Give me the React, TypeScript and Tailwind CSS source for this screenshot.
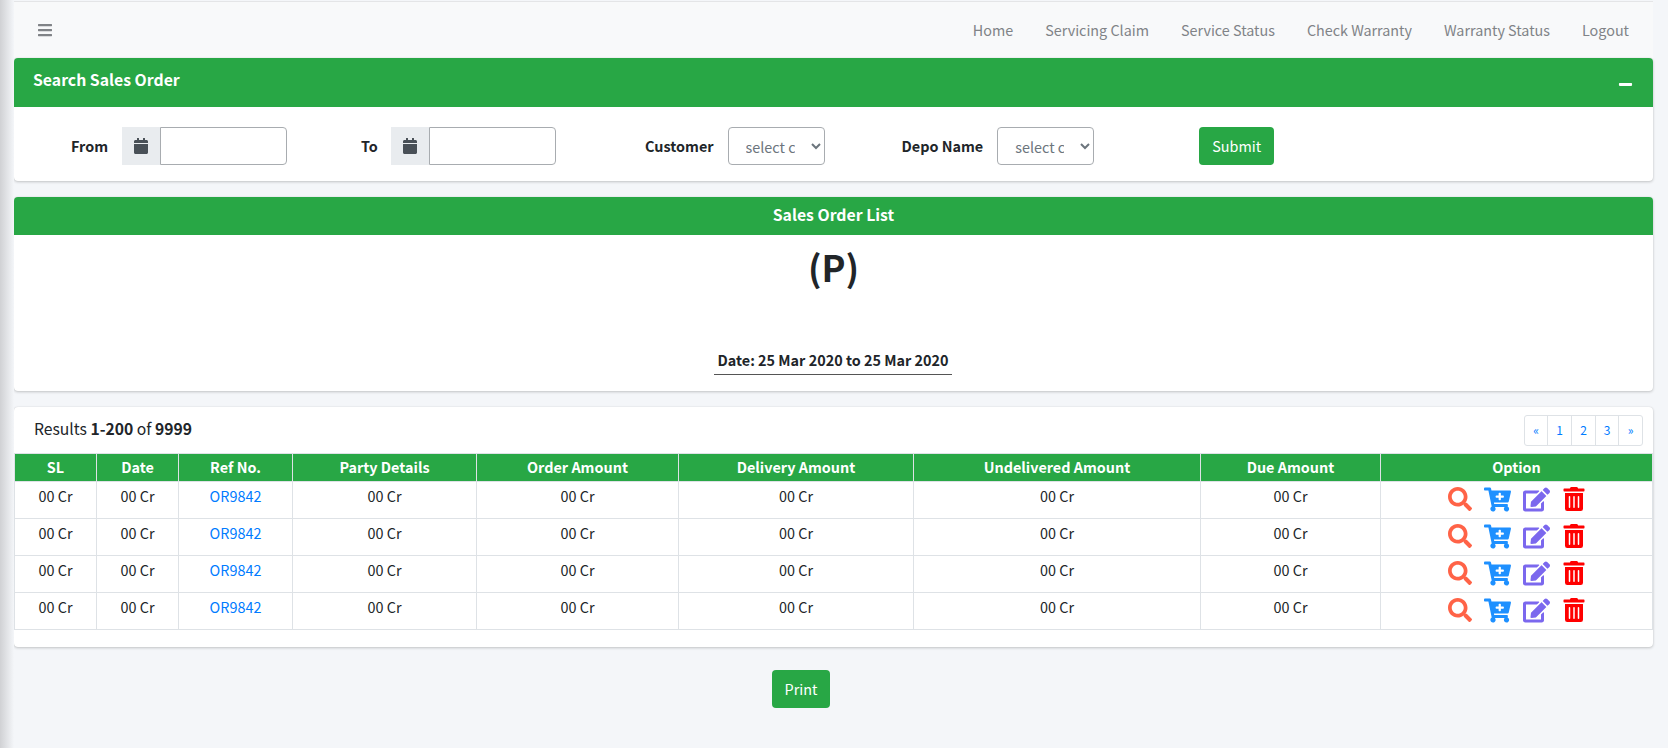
import { FaBars, FaCalendar, FaCartPlus, FaEdit, FaMinus, FaSearch, FaTrashAlt } from 'react-icons/fa';

const navLinks = ['Home', 'Servicing Claim', 'Service Status', 'Check Warranty', 'Warranty Status', 'Logout'];
const columns = [
  { label: 'SL', width: 'w-[82px]' },
  { label: 'Date', width: 'w-[82px]' },
  { label: 'Ref No.', width: 'w-[114px]' },
  { label: 'Party Details', width: 'w-[184px]' },
  { label: 'Order Amount', width: 'w-[202px]' },
  { label: 'Delivery Amount', width: 'w-[235px]' },
  { label: 'Undelivered Amount', width: 'w-[287px]' },
  { label: 'Due Amount', width: 'w-[180px]' },
  { label: 'Option', width: 'w-[272px]' },
];
const rows = [1, 2, 3, 4];
const pages = ['«', '1', '2', '3', '»'];
const pageWidths = ['w-[23px]', 'w-[24px]', 'w-[24px]', 'w-[23px]', 'w-[23px]'];
const cardClass = 'rounded-[4px] bg-white shadow-[0_0_1px_rgba(0,0,0,0.125),0_1px_3px_rgba(0,0,0,0.2)]';

function DateField({ label, labelWidth }: { label: string; labelWidth: string }) {
  return (
    <div className="flex items-center">
      <label className={`${labelWidth} font-bold text-[#212529]`}>{label}</label>
      <div className="flex h-[38px] w-[38px] items-center justify-center bg-[#e9ecef] text-[#495057]">
        <FaCalendar className="text-[16px]" />
      </div>
      <input className="h-[38px] w-[127px] rounded-r-[4px] border border-[#a8acb0] bg-white" />
    </div>
  );
}

function SelectField({ label }: { label: string }) {
  return (
    <div className="flex items-center">
      <label className="mr-[14px] font-bold text-[#212529]">{label}</label>
      <select className="h-[38px] w-[97px] rounded-[4px] border border-[#a8acb0] bg-white px-[13px] text-[#6c757d]">
        <option>select customer</option>
      </select>
    </div>
  );
}

export default function App() {
  return (
    <div
      className="relative h-[748px] overflow-hidden bg-[#f4f6f9] pr-[15px] text-[14.4px] leading-[24px] text-[#212529]"
      style={{ fontFamily: '"Noto Sans CJK SC", "Noto Sans", sans-serif' }}
    >
      <div className="absolute inset-y-0 left-0 w-[14px] bg-gradient-to-r from-[#d0d1d4] to-[#f4f6f9]" />

      <nav className="mt-[1px] flex h-[57px] items-center justify-between border-t border-[#e4e5e7] bg-[#f8f9fa] pl-[37px] pr-[8px]">
        <FaBars className="relative text-[16px] text-[#808387]" />
        <div className="flex text-[14.35px]">
          {navLinks.map((link) => (
            <a key={link} className="px-[16px] text-[#808387]">{link}</a>
          ))}
        </div>
      </nav>

      <main className="ml-[14px] flex flex-col gap-[16px]">
        <section className={cardClass}>
          <div className="flex h-[49px] items-center justify-between rounded-t-[4px] bg-[#28a745] pl-[19px] pr-[20px] text-white">
            <h3 className="mb-[6px] text-[15.8px] font-bold">Search Sales Order</h3>
            <FaMinus className="mt-[4px] text-[15px]" />
          </div>
          <div className="flex h-[74px] items-center pl-[57px] pt-[4px]">
            <DateField label="From" labelWidth="w-[51px]" />
            <div className="ml-[74px]"><DateField label="To" labelWidth="w-[30px]" /></div>
            <div className="ml-[89px]"><SelectField label="Customer" /></div>
            <div className="ml-[77px]"><SelectField label="Depo Name" /></div>
            <button className="ml-[105px] h-[38px] w-[75px] rounded-[4px] bg-[#28a745] text-white">Submit</button>
          </div>
        </section>

        <section className={cardClass}>
          <div className="flex h-[38px] items-center justify-center rounded-t-[4px] bg-[#28a745] pb-[2px] text-[15.8px] font-bold text-white">
            Sales Order List
          </div>
          <div className="flex h-[156px] flex-col items-center">
            <h1 className="mt-[7px] text-[36px] leading-[48px] font-bold">(P)</h1>
            <p className="mt-[58px] mr-[1px] w-[238px] border-b border-[#555] pb-[2px] text-center font-bold">
              Date: 25 Mar 2020 to 25 Mar 2020
            </p>
          </div>
        </section>

        <section className={`${cardClass} h-[240px]`}>
          <div className="flex h-[46px] items-center justify-between pl-[20px] pr-[10px]">
            <p className="mb-[3px] text-[15.7px]">Results <b>1-200</b> of <b>9999</b></p>
            <div className="flex h-[31px] rounded-[3px] border border-[#dee2e6] text-[12px] text-[#007bff]">
              {pages.map((page, i) => (
                <a
                  key={page}
                  className={`${pageWidths[i]} flex items-center justify-center border-r border-[#dee2e6] last:border-r-0`}
                >
                  {page}
                </a>
              ))}
            </div>
          </div>
          <table className="w-[1638px] table-fixed border-collapse text-center">
            <thead>
              <tr className="h-[28px] bg-[#28a745] text-white">
                {columns.map((col) => (
                  <th key={col.label} className={`${col.width} border border-[#dee2e6] p-0 pb-[2px] font-bold`}>
                    {col.label}
                  </th>
                ))}
              </tr>
            </thead>
            <tbody>
              {rows.map((row) => (
                <tr key={row} className="h-[37px]">
                  {columns.map((col) => (
                    <td key={col.label} className="border border-[#dee2e6] px-0 pt-[2px] pb-[10px] align-top">
                      {col.label === 'Ref No.' ? (
                        <a className="text-[#007bff]">OR9842</a>
                      ) : col.label === 'Option' ? (
                        <div className="mt-[3px] -mb-[3px] flex h-[24px] items-center justify-center gap-[12px]">
                          <FaSearch className="text-[24px] text-[#ff6347]" />
                          <FaCartPlus className="text-[27px] text-[#1e90ff]" />
                          <FaEdit className="text-[27px] text-[#7b68ee]" />
                          <FaTrashAlt className="text-[24px] text-[#ff0000]" />
                        </div>
                      ) : (
                        '00 Cr'
                      )}
                    </td>
                  ))}
                </tr>
              ))}
            </tbody>
          </table>
        </section>

        <div className="mt-[7px] flex justify-center pr-[65px]">
          <button className="h-[38px] w-[58px] rounded-[4px] bg-[#28a745] text-white">Print</button>
        </div>
      </main>
    </div>
  );
}
